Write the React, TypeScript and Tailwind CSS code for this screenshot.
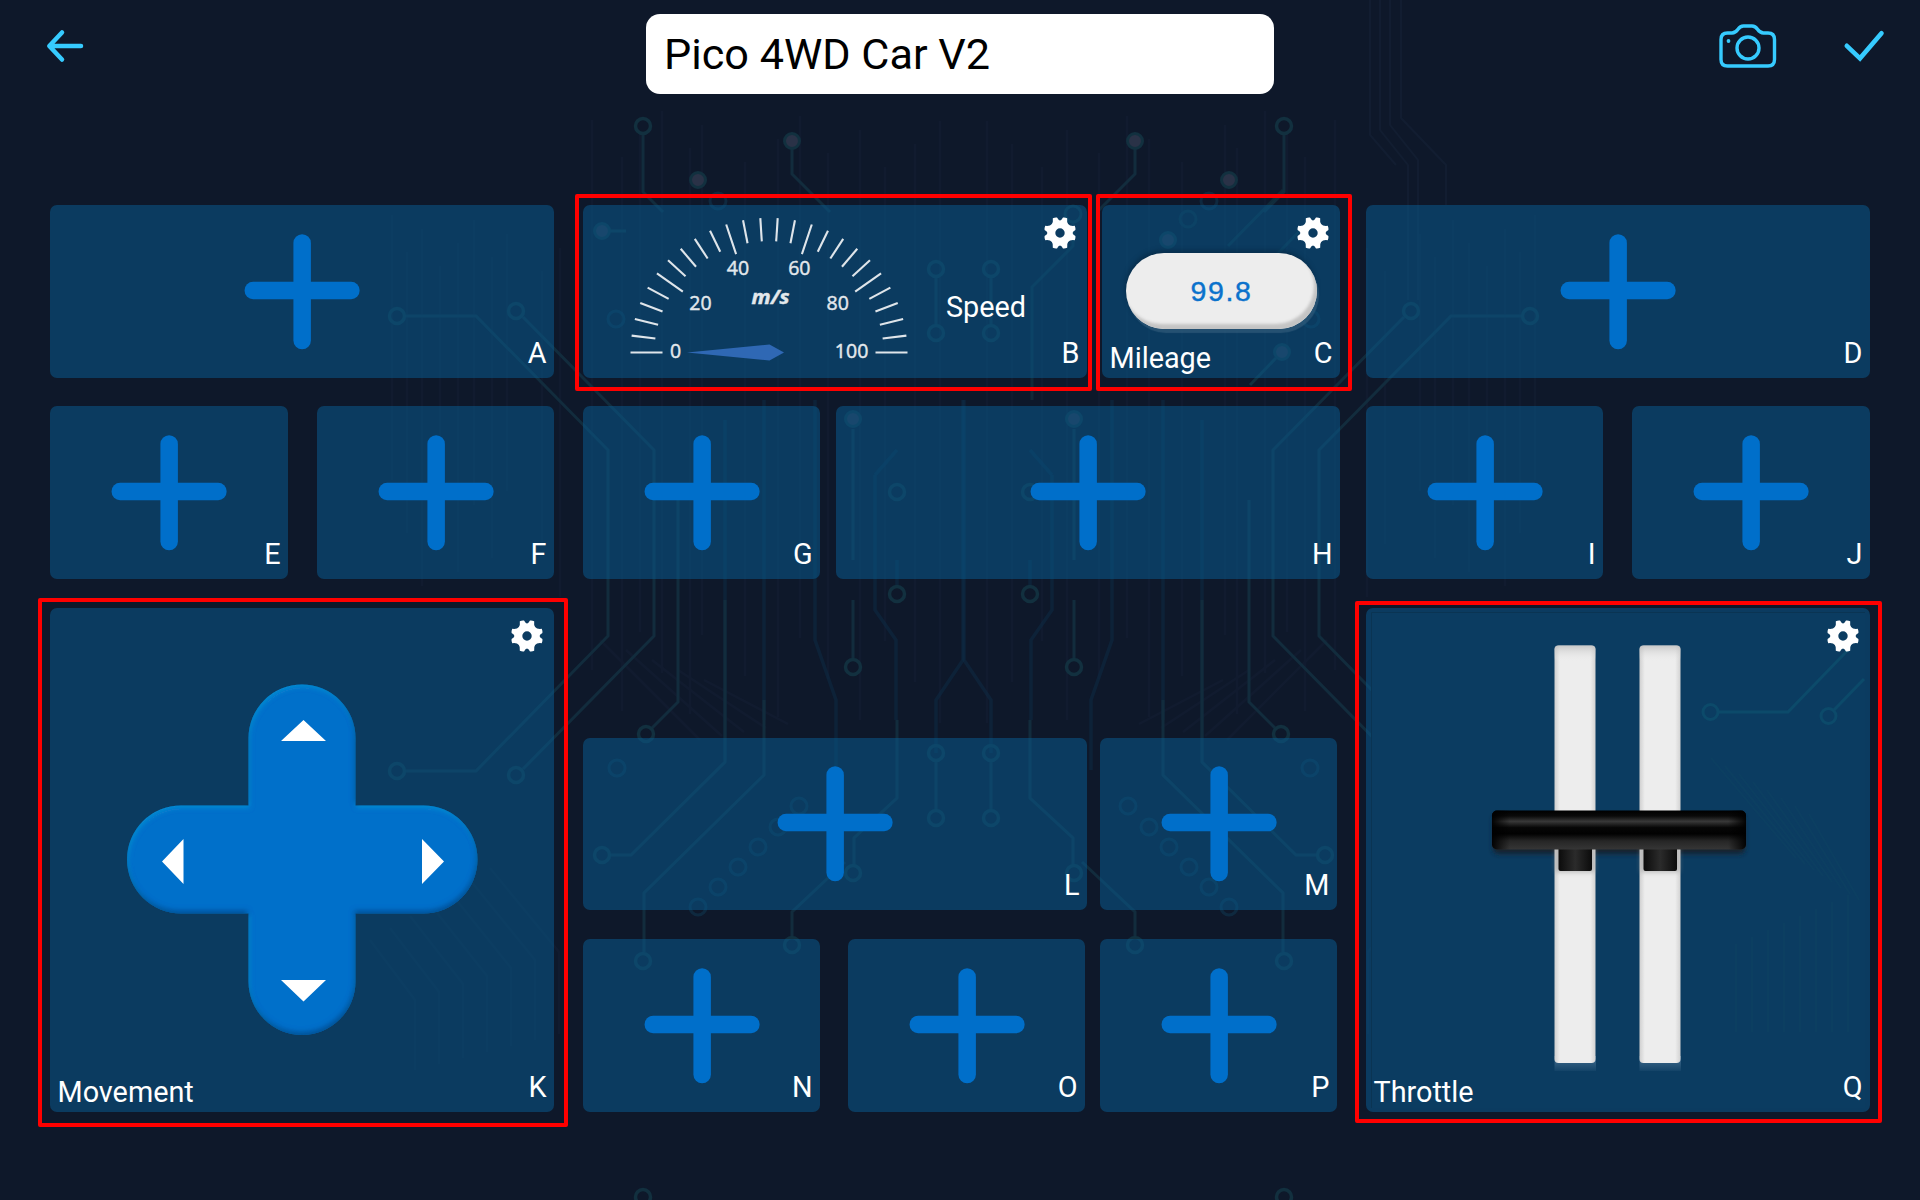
import React from "react";

const CENTER = 963.5;

const tracks: string[] = [
  "M406 316H476L608 450V636L476 771H406",
  "M523 317L654 450V636L523 769",
  "M643 134V192L663 212",
  "M792 149V174L830 212",
  "M678 500V702L651 729",
  "M725 600V762L631 855H611",
  "M764 700V775L644 893V952",
  "M897 720V798L854 838V865",
  "M845 862L792 912V936",
  "M936 278V324",
  "M936 762V809",
  "M853 429V560M853 600V658",
];

const faintTracks: string[] = [
  "M725 420V760",
  "M764 400V720",
  "M815 400V640L836 700V770",
  "M875 475L897 450M875 475V610L896 640V720",
  "M936 753V700L963 660V400",
  "M897 560V586",
];

const rings: [number, number][] = [
  [643, 126], [397, 316], [516, 311], [397, 771], [516, 775], [936, 269], [936, 333],
  [897, 492], [897, 594], [853, 667], [646, 734], [602, 855], [936, 753], [936, 818],
  [853, 873], [792, 945], [643, 961], [643, 1197],
];
const faintRings: [number, number][] = [
  [718, 201], [617, 768], [799, 806], [778, 827], [758, 847], [738, 867], [718, 887], [698, 907], [616, 319],
];
const dots: [number, number][] = [
  [792, 141], [698, 180], [853, 419],
];
const grain = [392, 407, 422, 440, 458, 474, 492, 507, 542, 560, 592, 622, 640, 662, 690, 702, 745, 778, 800, 828, 860, 885, 915, 940];

function CircuitHalf() {
  return (
    <g>
      <g stroke="#1b2740" strokeWidth="2.500" opacity=".25">
        {grain.map((x, i) => (
          <path key={x} d={`M${x} ${(i < 10 ? 215 : 110) + ((i * 37) % 60)}V${i < 10 ? 480 + ((i * 53) % 120) : 620 + ((i * 41) % 120)}`} />
        ))}
        {[0, 1, 2, 3, 4, 5, 6].map((i) => (
          <path key={i} d={`M${415 + i * 24} ${1070 - i * 6}V${1000 - i * 8}L${370 + i * 20} ${940 - i * 12}`} />
        ))}
        {[0, 1, 2, 3, 4].map((i) => (
          <path key={i} d={`M${600 + i * 26} ${640 + i * 10}L${700 + i * 22} ${740 - i * 4}`} />
        ))}
      </g>
      <g stroke="#0d2c46" strokeWidth="3.500" opacity=".5">
        {faintTracks.map((d) => <path key={d} d={d} />)}
      </g>
      <g stroke="#0f3149" strokeWidth="3" opacity=".7">
        {faintRings.map(([x, y]) => <circle key={`${x}-${y}`} cx={x} cy={y} r="8" />)}
      </g>
      <g stroke="#122c3d" strokeWidth="3">
        {tracks.map((d) => <path key={d} d={d} />)}
      </g>
      <g stroke="#12303f" strokeWidth="3">
        {rings.map(([x, y]) => <circle key={`${x}-${y}`} cx={x} cy={y} r="7.5" strokeWidth="3.5" />)}
        {dots.map(([x, y]) => <circle key={`${x}-${y}`} cx={x} cy={y} r="7.5" fill="#2a3247" />)}
      </g>
    </g>
  );
}

function CircuitBackdrop() {
  return (
    <svg className="absolute inset-0" width="1920" height="1200" fill="none" aria-hidden>
      <CircuitHalf />
      <g transform={`translate(${CENTER * 2} 0) scale(-1 1)`}>
        <CircuitHalf />
      </g>
      <g stroke="#12303f" strokeWidth="3">
        <circle cx="602" cy="231" r="7.5" fill="#2a3247" />
        <path d="M610 231H626" />
        <circle cx="1168" cy="240" r="7.5" fill="#2a3247" />
        <circle cx="1282" cy="352" r="7.5" fill="#2a3247" />
        <path d="M1276 358L1250 385" />
        <path d="M1283 190L1228 246M1310 220L1262 270" opacity=".7" />
        <circle cx="1073" cy="214" r="8" />
        <circle cx="1188" cy="219" r="8" opacity=".6" />
        <path d="M1073 222V246L1032 287V400" opacity=".7" />
        <path d="M1370 0V135L1396 165M1380 0V130L1408 165V300M1390 0V125L1418 160V300M1401 0V118L1446 165V205" stroke="#1b2740" strokeWidth="2" opacity=".35" />
      </g>
    </svg>
  );
}

function gearPath() {
  const point = (deg: number, r: number) => {
    const a = (deg * Math.PI) / 180;
    return `${(16 + r * Math.sin(a)).toFixed(2)} ${(16 - r * Math.cos(a)).toFixed(2)}`;
  };
  let d = `M${point(11, 15.7)}`;
  for (let i = 0; i < 4; i++) {
    const t = i * 90;
    d += `Q${point(t + 17, 16.5)} ${point(t + 26, 16.4)}`;
    d += `Q${point(t + 45, 8.6)} ${point(t + 64, 16.4)}`;
    d += `Q${point(t + 73, 16.5)} ${point(t + 79, 15.7)}`;
    d += `Q${point(t + 90, 9.8)} ${point(t + 101, 15.7)}`;
  }
  return d + "ZM16 11.3a4.7 4.7 0 1 0 0 9.4a4.7 4.7 0 1 0 0-9.4Z";
}
const GEAR = gearPath();

function Gear() {
  return (
    <svg className="absolute right-[11px] top-3" width="32" height="32" viewBox="0 0 32 32" aria-label="Settings">
      <path d={GEAR} fill="#fff" fillRule="evenodd" />
    </svg>
  );
}

function Plus() {
  return (
    <svg width="116" height="116" viewBox="0 0 116 116" fill="#006fca" aria-label="Add widget">
      <rect x="49.400" y="0.300" width="17.500" height="115" rx="8.750" />
      <rect x="0.600" y="47.800" width="115" height="17.500" rx="8.500" />
    </svg>
  );
}

type CardProps = {
  id: string;
  className: string;
  label?: string;
  gear?: boolean;
  outline?: string;
  children?: React.ReactNode;
};

function Card({ id, className, label, gear, outline, children }: CardProps) {
  return (
    <section className={`relative flex shrink-0 items-center justify-center rounded-[7px] bg-[rgba(9,90,141,0.55)] ${className}`}>
      {children ?? <Plus />}
      {gear && <Gear />}
      {label && <span className="absolute bottom-0.5 left-[7.5px] text-[28.8px] leading-9">{label}</span>}
      <span className="absolute bottom-[7px] right-[7.5px] text-[28.8px] leading-9">{id}</span>
      {outline && <div className={`pointer-events-none absolute rounded-[2px] border-4 border-[#ff0000] ${outline}`} />}
    </section>
  );
}

function Gauge() {
  const ticks = Array.from({ length: 26 }, (_, i) => {
    const a = (i * 7.2 * Math.PI) / 180;
    const inner = i % 5 === 0 ? 106.5 : 114.5;
    const [c, s] = [Math.cos(a), Math.sin(a) * 0.972];
    return { x1: 186 - 138.5 * c, y1: 147.5 - 138.5 * s, x2: 186 - inner * c, y2: 147.5 - inner * s };
  });
  return (
    <svg width="340" height="173" viewBox="0 0 340 173" className="shrink-0">
      <g stroke="#dfe5ea" strokeWidth="2.100">
        {ticks.map((t, i) => <line key={i} {...t} />)}
      </g>
      <g fill="#e3e8ec" stroke="#e3e8ec" strokeWidth=".45" fontFamily="'Open Sans', sans-serif" fontSize="19.5" fontWeight="500" textAnchor="middle">
        <text x="92.7" y="152.500">0</text>
        <text x="117.4" y="105">20</text>
        <text x="155" y="70">40</text>
        <text x="216.3" y="70">60</text>
        <text x="254.7" y="105">80</text>
        <text x="268.6" y="152.500">100</text>
        <text x="187.6" y="99" fontWeight="700" fontStyle="italic" fontSize="20" textLength="38" lengthAdjust="spacingAndGlyphs">m/s</text>
      </g>
      <path d="M104 147.500L186.500 139.500L201 147.500L186.500 155.500Z" fill="#2f68b4" />
    </svg>
  );
}

function DPad() {
  return (
    <svg width="352" height="352" viewBox="0 0 352 352">
      <defs>
        <filter id="bevel" x="-5%" y="-5%" width="110%" height="110%">
          <feGaussianBlur in="SourceAlpha" stdDeviation="2.5" result="b" />
          <feOffset in="b" dx="1" dy="2" result="lo" />
          <feComposite in="SourceAlpha" in2="lo" operator="out" result="hiMask" />
          <feFlood floodColor="#1c9cda" floodOpacity=".7" />
          <feComposite in2="hiMask" operator="in" result="hi" />
          <feOffset in="b" dx="-1.5" dy="-3" result="up" />
          <feComposite in="SourceAlpha" in2="up" operator="out" result="shMask" />
          <feFlood floodColor="#023f7c" floodOpacity=".75" />
          <feComposite in2="shMask" operator="in" result="sh" />
          <feMerge>
            <feMergeNode in="SourceGraphic" />
            <feMergeNode in="hi" />
            <feMergeNode in="sh" />
          </feMerge>
        </filter>
      </defs>
      <path
        filter="url(#bevel)"
        fill="#006fca"
        d="M122.500 54A53.500 53.500 0 0 1 229.500 54V121.500H297.500A54 54 0 0 1 297.500 229.500H229.500V297.500A53.500 53.500 0 0 1 122.500 297.500V229.500H55A54 54 0 0 1 55 121.500H122.500Z"
      />
      <path fill="#fff" d="M177.500 36L200 57H155ZM155 296H200L177.500 317.500ZM36 177.500L57.500 155V200ZM296 155L318 177.500L296 200Z" />
    </svg>
  );
}

function Throttle() {
  return (
    <svg width="504" height="504" viewBox="0 0 504 504">
      <defs>
        <linearGradient id="slot">
          <stop offset="0" stopColor="#cfcfcf" />
          <stop offset=".13" stopColor="#ededed" />
          <stop offset=".87" stopColor="#ededed" />
          <stop offset="1" stopColor="#d2d2d2" />
        </linearGradient>
        <linearGradient id="slotTop" x2="0" y2="1">
          <stop offset="0" stopColor="#b5b5b5" stopOpacity=".65" />
          <stop offset="1" stopColor="#ededed" stopOpacity="0" />
        </linearGradient>
        <linearGradient id="glow" x2="0" y2="1">
          <stop offset="0" stopColor="#5d84a4" stopOpacity=".7" />
          <stop offset="1" stopColor="#5d84a4" stopOpacity=".1" />
        </linearGradient>
        <linearGradient id="handle" x2="0" y2="1">
          <stop offset="0" stopColor="#000" />
          <stop offset=".14" stopColor="#0a0a0a" />
          <stop offset=".28" stopColor="#383838" />
          <stop offset=".44" stopColor="#060606" />
          <stop offset=".6" stopColor="#020202" />
          <stop offset=".78" stopColor="#262626" />
          <stop offset="1" stopColor="#363636" />
        </linearGradient>
        <linearGradient id="ends">
          <stop offset="0" stopColor="#000" stopOpacity=".95" />
          <stop offset=".07" stopColor="#000" stopOpacity="0" />
          <stop offset=".93" stopColor="#000" stopOpacity="0" />
          <stop offset="1" stopColor="#000" stopOpacity=".95" />
        </linearGradient>
        <linearGradient id="stem">
          <stop offset="0" stopColor="#0b0b0b" />
          <stop offset=".5" stopColor="#2b2b2b" />
          <stop offset="1" stopColor="#0b0b0b" />
        </linearGradient>
        <filter id="soft" x="-10%" y="-60%" width="120%" height="220%">
          <feGaussianBlur stdDeviation="2.5" />
        </filter>
      </defs>
      <rect x="5" y="4" width="494" height="496" fill="#0b3c61" />
      <path d="M5.500 500V4.500H499" fill="none" stroke="#0a3453" strokeWidth="1" />
      <g fill="none" stroke="#0c4a6a" strokeWidth="3">
        <circle cx="344.500" cy="104" r="7.500" />
        <path d="M353 104H422L482 42" />
        <circle cx="462.500" cy="108" r="7.500" />
        <path d="M468 102L498 71" />
      </g>
      <g fill="none" stroke="#0d4162" strokeWidth="2" opacity=".6">
        {[0, 1, 2, 3, 4, 5, 6, 7].map((i) => (
          <path key={i} d={`M${345 + i * 14} ${150 + i * 8}L${430 + i * 9} ${250 + i * 6}`} />
        ))}
        {[0, 1, 2, 3, 4, 5, 6, 7].map((i) => (
          <path key={i} d={`M${370 + i * 16} ${336 - i * 7}V424`} />
        ))}
      </g>
      <rect x="127" y="207" width="252" height="39" rx="5" fill="#12222f" filter="url(#soft)" />
      {[188.5, 273.5].map((x) => (
        <g key={x}>
          <rect x={x} y="448" width="41.500" height="15" fill="url(#glow)" />
          <rect x={x} y="37.500" width="41" height="417.500" rx="4" fill="url(#slot)" />
          <rect x={x} y="37.500" width="41" height="16" rx="4" fill="url(#slotTop)" />
          <rect x={x + 1} y="234" width="39" height="30" fill="#8a8a8a" opacity=".55" filter="url(#soft)" />
          <rect x={x + 4} y="236" width="33.500" height="27" rx="2" fill="url(#stem)" />
        </g>
      ))}
      <rect x="126" y="202.500" width="254" height="39" rx="5" fill="url(#handle)" />
      <rect x="126" y="202.500" width="254" height="39" rx="5" fill="url(#ends)" />
    </svg>
  );
}

export default function App() {
  return (
    <div className="relative h-[1200px] w-[1920px] overflow-hidden bg-[#0e182a] font-['Roboto',sans-serif] text-white">
      <CircuitBackdrop />
      <div className="relative flex h-full flex-col">
        <header className="grid h-[205px] grid-cols-[1fr_628px_1fr] items-start pt-3.5">
          <svg className="ml-[45px] mt-3.5" width="40" height="36" viewBox="0 0 40 36" fill="none" stroke="#36cbff" strokeWidth="4.500" strokeLinecap="round" strokeLinejoin="round" aria-label="Back">
            <path d="M17 4.500L4.300 18L17 31.500M5 18H36" />
          </svg>
          <div className="flex h-20 items-center rounded-[14px] bg-white px-[18px] pt-0.5 text-[43.2px] text-black">Pico 4WD Car V2</div>
          <div className="flex items-start justify-end pr-[34px]">
            <svg className="mr-16 mt-[9px]" width="60" height="46" viewBox="0 0 60 46" fill="none" stroke="#36cbff" strokeWidth="3.400" strokeLinejoin="round" aria-label="Camera">
              <path d="M9.500 10H14C17 10 18.500 8.500 20 6.300C21.500 4 23 3 25.500 3H34C36.500 3 38 4 39.500 6.300C41 8.500 42.500 10 45.500 10H50C54.500 10 56.500 12.500 56.500 16.500V36.500C56.500 40.500 54.500 43 50 43H9.500C5 43 3 40.500 3 36.500V16.500C3 12.500 5 10 9.500 10Z" />
              <circle cx="30" cy="25" r="11" />
              <circle cx="10.500" cy="18" r="1.900" fill="#36cbff" stroke="none" />
            </svg>
            <svg className="mt-3.5" width="44" height="36" viewBox="0 0 44 36" fill="none" stroke="#36cbff" strokeWidth="4.600" strokeLinecap="round" aria-label="Confirm">
              <path d="M4.800 17.800L18 30.300L39.500 5.200" />
            </svg>
          </div>
        </header>

        <main className="flex pl-[50px]">
          <div className="flex w-[504px] flex-col">
            <Card id="A" className="h-[173px] w-[504px]" />
            <div className="mt-7 flex justify-between">
              <Card id="E" className="h-[173px] w-[238px]" />
              <Card id="F" className="h-[173px] w-[237px]" />
            </div>
            <Card id="K" label="Movement" gear className="mt-[29px] h-[504px] w-[504px]" outline="-bottom-[15px] -left-[12px] -right-[14px] -top-[10px]">
              <DPad />
            </Card>
          </div>

          <div className="ml-[29px] flex w-[757px] flex-col">
            <div className="flex justify-between">
              <Card id="B" gear className="h-[173px] w-[504px]" outline="-bottom-[13px] -left-2 -right-[5px] -top-[11px]">
                <div className="flex h-full w-full items-center">
                  <Gauge />
                  <span className="ml-[23px] mt-[31px] text-[28.8px] leading-9">Speed</span>
                </div>
              </Card>
              <Card id="C" label="Mileage" gear className="h-[173px] w-[238px]" outline="-bottom-[13px] -left-1.5 -right-3 -top-[11px]">
                <div className="mb-[1px] flex h-[76px] w-[191px] items-center justify-center rounded-full bg-[#ededed] pl-px pt-px font-['Liberation_Sans',sans-serif] text-[28.5px] tracking-[1.6px] text-[#0b72cc] shadow-[inset_-3px_-5px_3px_#c4c4c4,2px_4px_1px_rgba(60,100,130,0.550),-1px_-3px_4px_rgba(5,35,60,0.500)] [-webkit-text-stroke:0.4px_#0b72cc]">
                  99.8
                </div>
              </Card>
            </div>
            <div className="mt-7 flex justify-between">
              <Card id="G" className="h-[173px] w-[237px]" />
              <Card id="H" className="h-[173px] w-[504px]" />
            </div>
            <div className="mt-[159px] flex w-[754px] justify-between">
              <Card id="L" className="h-[172px] w-[504px]" />
              <Card id="M" className="h-[172px] w-[237px]" />
            </div>
            <div className="mt-[29px] flex">
              <Card id="N" className="h-[173px] w-[237px]" />
              <Card id="O" className="ml-7 h-[173px] w-[237px]" />
              <Card id="P" className="ml-[15px] h-[173px] w-[237px]" />
            </div>
          </div>

          <div className="ml-[26px] flex w-[504px] flex-col">
            <Card id="D" className="h-[173px] w-[504px]" />
            <div className="mt-7 flex justify-between">
              <Card id="I" className="h-[173px] w-[237px]" />
              <Card id="J" className="h-[173px] w-[238px]" />
            </div>
            <Card id="Q" label="Throttle" gear className="mt-[29px] h-[504px] w-[504px]" outline="-bottom-[11px] -left-[11px] -right-[12px] -top-[7px]">
              <Throttle />
            </Card>
          </div>
        </main>
      </div>
    </div>
  );
}
